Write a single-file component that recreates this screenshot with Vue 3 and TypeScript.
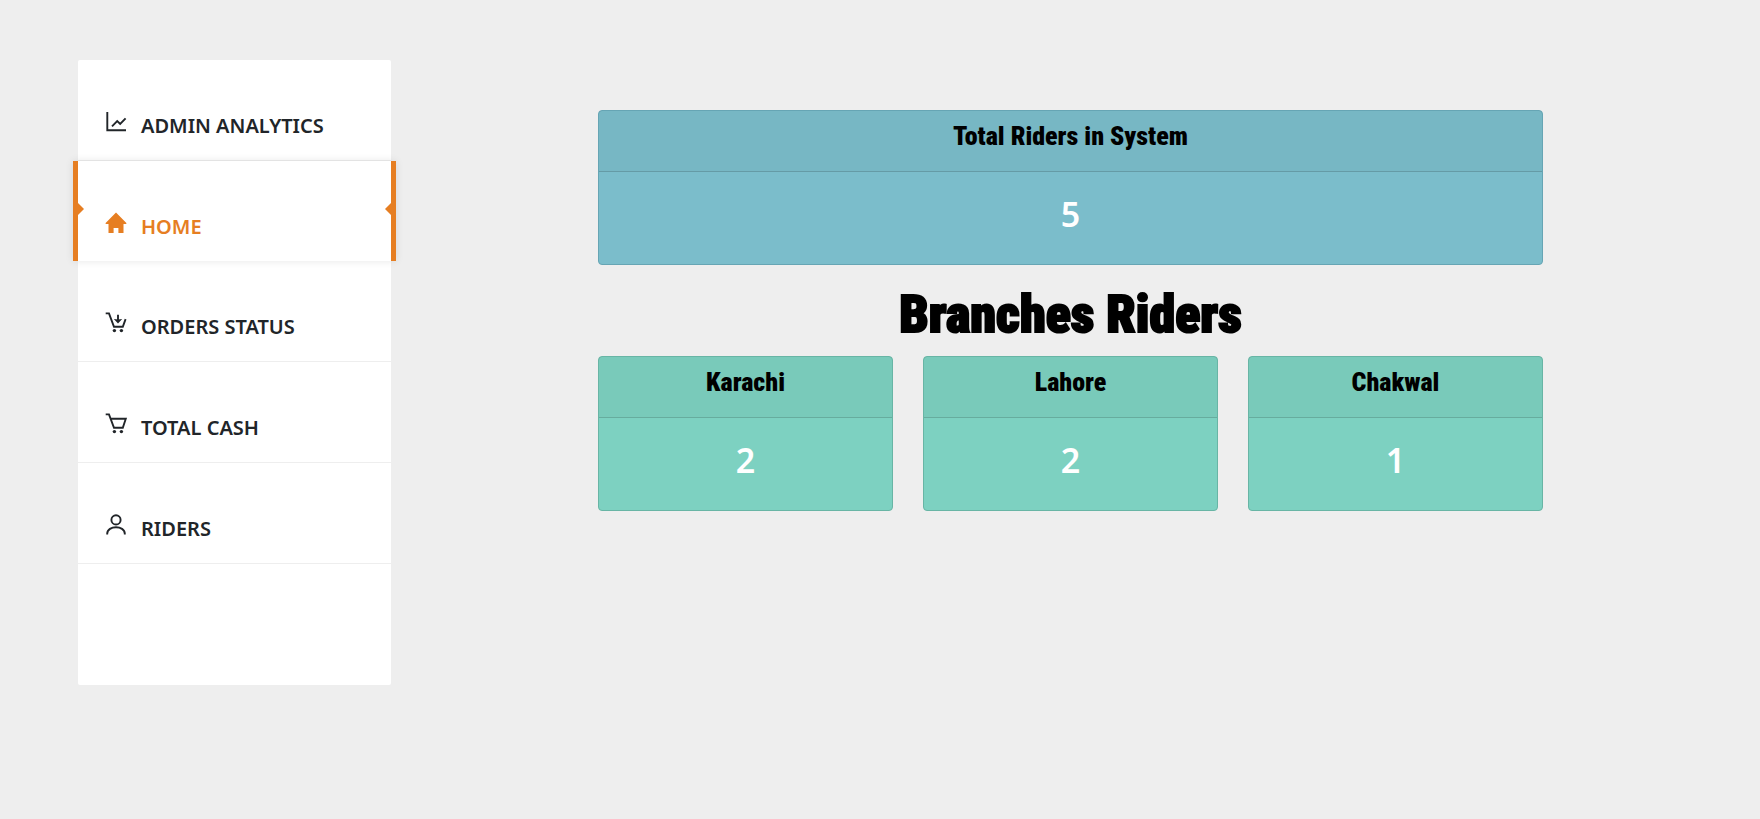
<script setup lang="ts">
import { ref } from 'vue'

type IconName = 'chart' | 'home' | 'orders' | 'cart' | 'person'

interface MenuItem {
  label: string
  icon: IconName
}

interface Branch {
  city: string
  riders: number
}

const menu: MenuItem[] = [
  { label: 'ADMIN ANALYTICS', icon: 'chart' },
  { label: 'HOME', icon: 'home' },
  { label: 'ORDERS STATUS', icon: 'orders' },
  { label: 'TOTAL CASH', icon: 'cart' },
  { label: 'RIDERS', icon: 'person' },
]

const branches: Branch[] = [
  { city: 'Karachi', riders: 2 },
  { city: 'Lahore', riders: 2 },
  { city: 'Chakwal', riders: 1 },
]

const active = ref('HOME')
const totalRiders = 5
</script>

<template>
  <div class="page">
    <nav class="sidebar">
      <ul class="menu">
        <li v-for="item in menu" :key="item.label">
          <a
            href="#"
            class="item"
            :class="{ active: item.label === active }"
            @click.prevent="active = item.label"
          >
            <svg class="icon" viewBox="0 0 22 22" aria-hidden="true">
              <template v-if="item.icon === 'chart'">
                <path class="line" d="M2.3 1V19.2H21" />
                <path class="line" d="M7 15.3L12.2 10L15.2 13L20.6 7.4" />
              </template>
              <path
                v-else-if="item.icon === 'home'"
                class="solid"
                d="M11 .5L21.6 11.2L21 12H18.5V21H13.4V16H8.6V21H3.5V12H1L.4 11.2Z"
              />
              <template v-else-if="item.icon === 'orders'">
                <path class="line" d="M.7 1.4H4L9 14.8H17.8L20.6 7.2" />
                <path class="line" d="M13 2.8V8" />
                <path class="solid" d="M8.8 7L13 7.6L17.2 7L13 11.6Z" />
                <circle class="solid" cx="9.4" cy="18.6" r="1.7" />
                <circle class="solid" cx="16.4" cy="18.6" r="1.7" />
              </template>
              <template v-else-if="item.icon === 'cart'">
                <path class="line" d="M.7 1.4H4L9 14.8H17.8L20.8 5.7H5.8" />
                <circle class="solid" cx="9.4" cy="18.6" r="1.7" />
                <circle class="solid" cx="16.4" cy="18.6" r="1.7" />
              </template>
              <template v-else>
                <circle class="line" cx="11" cy="5.9" r="4.6" />
                <path class="line" d="M2.2 20.6V19.8C2.2 11 19.8 11 19.8 19.8V20.6" />
              </template>
            </svg>
            <span>{{ item.label }}</span>
          </a>
        </li>
      </ul>
    </nav>

    <main class="content">
      <section class="card total">
        <h2 class="card-head">Total Riders in System</h2>
        <p class="card-body">{{ totalRiders }}</p>
      </section>
      <h1 class="title">Branches Riders</h1>
      <div class="branches">
        <section v-for="b in branches" :key="b.city" class="card branch">
          <h2 class="card-head">{{ b.city }}</h2>
          <p class="card-body">{{ b.riders }}</p>
        </section>
      </div>
    </main>
  </div>
</template>

<style>
body {
  margin: 0;
  background: #eee;
}
</style>

<style scoped>
.page {
  display: grid;
  grid-template-columns: minmax(240px, 313fr) minmax(0, 945fr);
  column-gap: 207px;
  align-items: start;
  padding: 60px 217px 60px 78px;
  font-family: 'Segoe UI', 'Noto Sans', sans-serif;
}

.sidebar {
  padding-bottom: 121px;
  border-radius: 2px;
  background: #fff;
}

.menu {
  margin: 0;
  padding: 0;
  list-style: none;
}

.item {
  position: relative;
  display: flex;
  gap: 14px;
  padding: 51px 27px 19px;
  border-bottom: 1px solid #eee;
  color: #212529;
  font-size: 20px;
  font-weight: 600;
  line-height: 30px;
  text-decoration: none;
}

.item.active {
  margin: 0 -5px;
  border-right: 5px solid #e67e22;
  border-bottom: 0;
  border-left: 5px solid #e67e22;
  background: #fff;
  color: #e67e22;
  box-shadow: 0 0 8px rgba(0, 0, 0, 0.1);
}

.item.active::before,
.item.active::after {
  content: '';
  position: absolute;
  top: 42px;
  border: 6px solid transparent;
}

.item.active::before {
  left: 0;
  border-right-width: 0;
  border-left-color: #e67e22;
}

.item.active::after {
  right: 0;
  border-left-width: 0;
  border-right-color: #e67e22;
}

.icon {
  flex: none;
  width: 22px;
  height: 22px;
}

.line {
  fill: none;
  stroke: currentColor;
  stroke-width: 1.9;
}

.solid {
  fill: currentColor;
}

.content {
  padding-top: 50px;
  text-align: center;
}

.card {
  border: 1px solid;
  border-radius: 4px;
}

.total {
  border-color: #66a5b4;
  background: #7bbdcb;
}

.branch {
  border-color: #68b5a5;
  background: #7dd1c1;
}

.card-head {
  margin: 0;
  padding: 10px 20px 20px;
  border-bottom: 1px solid rgba(0, 0, 0, 0.15);
  background: rgba(0, 0, 0, 0.03);
  color: #000;
  font-family: Impact, 'Roboto Condensed', Roboto, sans-serif;
  font-size: 26px;
  font-weight: 900;
  line-height: 30px;
}

.card-body {
  margin: 0;
  padding: 16px 20px 24px;
  color: #fff;
  font-size: 34px;
  font-weight: 600;
  line-height: 52px;
}

.title {
  margin: 20px 0 11px;
  color: #000;
  font-family: Impact, 'Roboto Condensed', Roboto, sans-serif;
  font-size: 52px;
  font-weight: 900;
  line-height: 60px;
  -webkit-text-stroke: 2px #000;
}

.branches {
  display: grid;
  grid-template-columns: repeat(3, minmax(0, 1fr));
  gap: 30px;
}
</style>
